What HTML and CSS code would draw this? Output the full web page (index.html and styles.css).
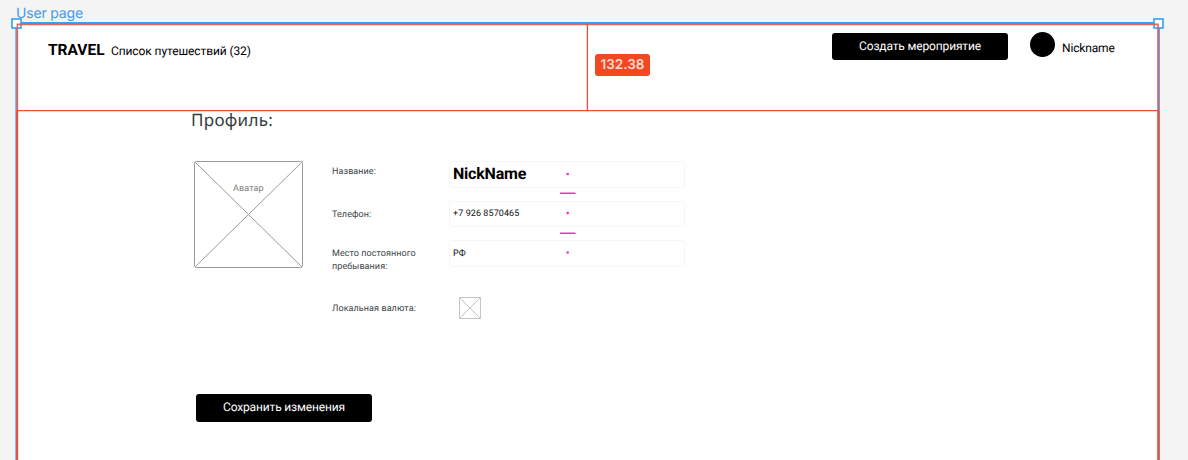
FILE: index.html
```html
<!DOCTYPE html>
<html lang="ru">
<head>
<meta charset="utf-8">
<title>User page</title>
<link rel="stylesheet" href="styles.css">
</head>
<body>
<div class="canvas">
  <div class="frame-label">User page</div>
  <main class="artboard">
    <header class="header">
      <nav class="nav">
        <span class="logo">TRAVEL</span>
        <span class="trips">Список путешествий (32)</span>
      </nav>
      <button class="button create">Создать мероприятие</button>
      <div class="user"><span class="user-avatar"></span><span class="user-name">Nickname</span></div>
    </header>
    <h1 class="title">Профиль:</h1>
    <section class="profile">
      <div class="avatar">
        <svg class="cross" viewBox="0 0 109 107"><rect x=".5" y=".5" width="108" height="106" rx="2"/><path d="M1 1 108 106M108 1 1 106"/></svg>
        <span class="avatar-text">Аватар</span>
      </div>
      <div class="fields">
        <label class="name-label">Название:</label><div class="field"><span class="field-name">NickName</span></div>
        <label>Телефон:</label><div class="field"><span class="field-phone">+7 926 8570465</span></div>
        <label class="place-label">Место постоянного<br>пребывания:</label><div class="field"><span class="field-country">РФ</span></div>
        <label class="currency-label">Локальная валюта:</label>
        <svg class="currency" viewBox="0 0 22 22"><path d="M.5 .5h21v21H.5zM.5 .5l21 21M21.5 .5l-21 21"/></svg>
      </div>
    </section>
    <button class="button save">Сохранить изменения</button>
  </main>
  <svg class="selection" viewBox="0 0 1188 460">
    <path class="blue" d="M16 23H1159"/>
    <path class="blue side" d="M16.3 23V460M1159 23V460"/>
    <g class="handles"><rect x="12" y="19" width="9" height="9"/><rect x="1154" y="19" width="9" height="9"/></g>
    <path class="red frame" d="M17.4 460V24.4H1158V460"/>
    <path class="red lower" d="M17 111V460M1158.5 111V460"/>
    <path class="red" d="M17 110.7H1159M587.4 24V111"/>
    <g class="pink"><path d="M560 193.2h15.5M560 233.2h15.5"/><circle cx="567.7" cy="174" r="1.3"/><circle cx="567.7" cy="213" r="1.3"/><circle cx="567.7" cy="252.5" r="1.3"/></g>
  </svg>
  <div class="measure">132.38</div>
</div>
</body>
</html>
```
FILE: styles.css
```css
* { box-sizing: border-box; }
body { margin: 0; font-family: Roboto, sans-serif; text-rendering: geometricPrecision; }
.canvas { position: relative; width: 1188px; height: 460px; overflow: hidden; background: #f4f4f4; }
.frame-label { height: 24px; padding: 6px 0 0 16px; font: 14px/16px Inter, sans-serif; letter-spacing: -.18px; color: #4398e8; white-space: nowrap; }
.artboard { width: 1141px; height: 436px; margin-left: 17px; background: #fff; }
.header { display: flex; align-items: flex-start; height: 86px; padding-left: 31px; white-space: nowrap; }
.nav { display: flex; align-items: baseline; width: 784px; padding-top: 17px; line-height: 18px; }
.logo { width: 63px; font-size: 15.5px; font-weight: 700; }
.trips { font-size: 12px; letter-spacing: -.1px; }
.button { display: block; width: 176px; height: 27.5px; padding: 0; border: 0; border-radius: 3px; background: #000; color: #fff; font: 12px/27px Roboto, sans-serif; letter-spacing: -.15px; text-rendering: inherit; }
.create { margin-top: 8.5px; }
.user { display: flex; margin: 8px 0 0 22px; }
.user-avatar { width: 25px; height: 25px; border-radius: 50%; background: #000; }
.user-name { padding: 7px 0 0 7px; font-size: 12px; line-height: 18px; letter-spacing: -.15px; }
.title { height: 51px; margin: 0; padding-left: 174px; font: 17px/20px "Noto Sans", sans-serif; color: #333b3d; letter-spacing: .3px; }
.profile { display: flex; height: 233px; padding-left: 177px; }
.avatar { position: relative; width: 109px; height: 107px; margin-right: 29px; }
.cross { display: block; width: 109px; height: 107px; fill: none; stroke: #9a9a9a; stroke-width: 1; }
.avatar-text { position: absolute; left: 39px; top: 22px; font-size: 9px; line-height: 13px; color: #808080; letter-spacing: .1px; }
.fields { display: grid; grid-template-columns: 117px 236px; grid-template-rows: 39.5px 39.5px 57px 22px; font-size: 9px; line-height: 13px; color: #3c4547; letter-spacing: .08px; white-space: nowrap; }
.fields label { padding-top: 8px; }
.fields .name-label { padding-top: 5px; }
.fields .currency-label { padding-top: 6px; }
.field { height: 26.5px; padding: 6.5px 0 0 3px; border: 1px solid #f6f6f6; border-radius: 3px; color: #111; }
.field-name { display: block; margin-top: -4px; font-size: 16px; line-height: 18px; font-weight: 700; letter-spacing: -.2px; color: #000; }
.currency { width: 22px; height: 22px; margin-left: 10px; fill: none; stroke: #c4c4c4; }
.save { margin-left: 179px; }
.selection { position: absolute; inset: 0; width: 1188px; height: 460px; fill: none; }
.blue { stroke: #36a0f5; stroke-width: 2; }
.side { stroke: #62a5e2; }
.handles { fill: #fff; stroke: #38a6fb; stroke-width: 1.7; }
.red { stroke: #f24e2c; stroke-width: 1.3; }
.frame { stroke: #e85742; stroke-width: 1.6; opacity: .9; }
.lower { stroke: #e4543d; stroke-width: 2; }
.pink path { stroke: #f531b3; stroke-width: 1.4; }
.pink circle { fill: #f531b3; }
.measure { position: absolute; left: 595px; top: 54px; width: 55px; height: 22px; border-radius: 3px; background: #f24822; color: #ffd9cf; font: 600 13.5px/23px Inter, sans-serif; text-align: center; }
```
